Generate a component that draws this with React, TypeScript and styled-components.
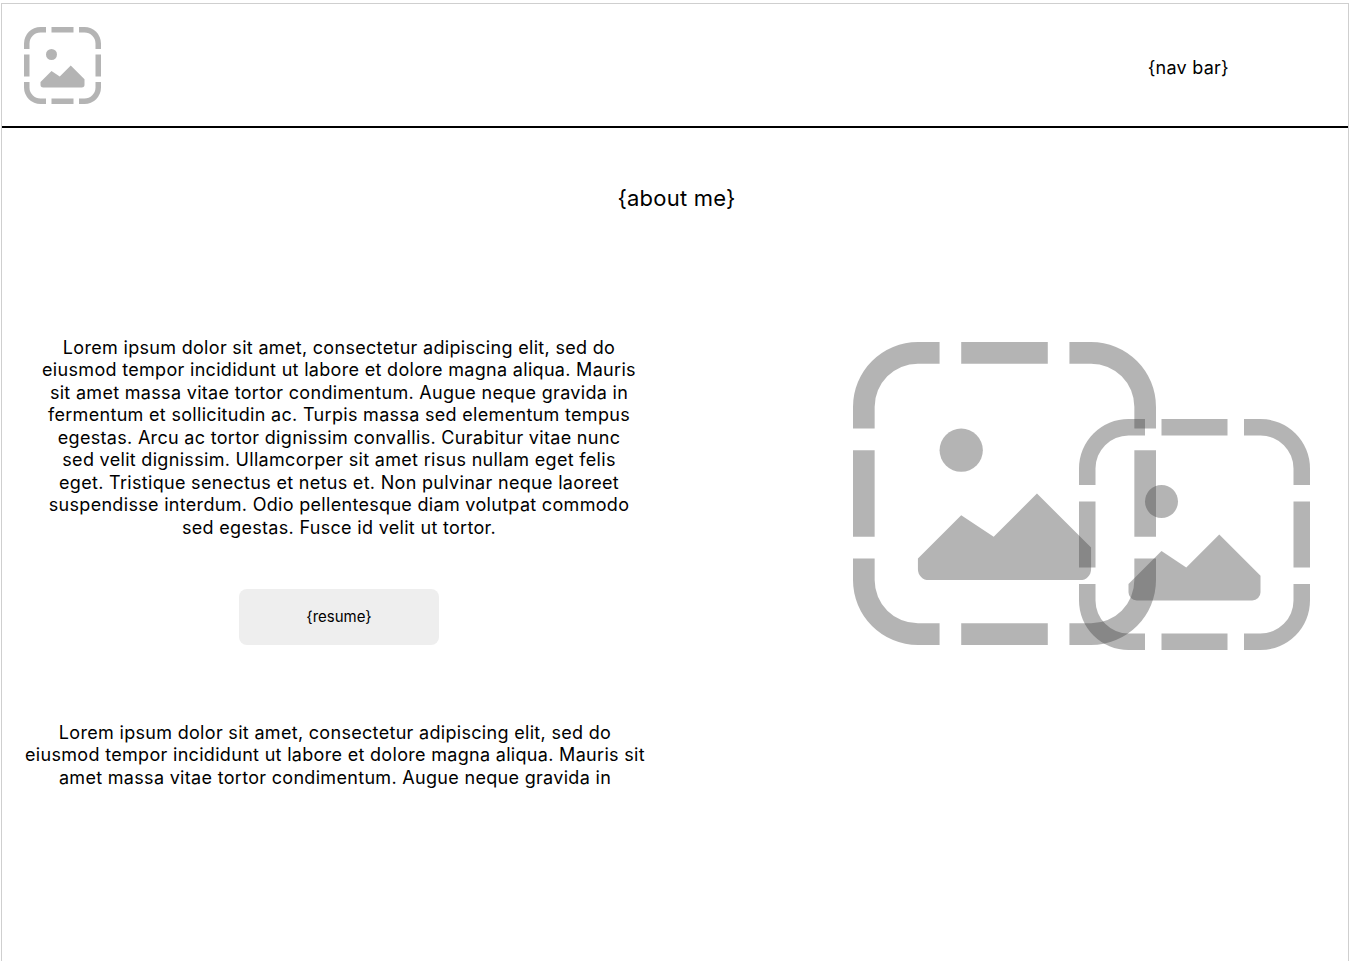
// App.tsx
// Wireframe da página "about me": barra de navegação, texto e placeholders de imagem.
import styled, { createGlobalStyle } from 'styled-components';

const GlobalStyle = createGlobalStyle`
  html, body {
    margin: 0;
    padding: 0;
    background: #fff;
    overflow: hidden;
  }

  body {
    font-family: 'Inter', 'Liberation Sans', sans-serif;
    color: #000;
  }
`;

const Frame = styled.div`
  box-sizing: border-box;
  width: 1348px;
  height: 958px;
  margin: 3px 0 0 1px;
  border: solid #cfcfcf;
  border-width: 1px 1px 0 1px;
  overflow: hidden;
`;

const Header = styled.header`
  box-sizing: border-box;
  height: 124px;
  display: flex;
  align-items: center;
  justify-content: space-between;
  padding: 0 119px 0 22px;
  border-bottom: 2px solid #000;
`;

const NavBar = styled.nav`
  margin-top: 5px;
  font-size: 18px;
  line-height: 22px;
  letter-spacing: 0.25px;
`;

const Title = styled.h1`
  margin: 57px 0 0;
  padding-left: 3px;
  font-size: 22px;
  font-weight: 400;
  line-height: 27px;
  letter-spacing: 0.2px;
  text-align: center;
`;

const Content = styled.main`
  display: flex;
  justify-content: space-between;
  margin-top: 124.5px;
`;

const TextColumn = styled.section`
  width: 630px;
  margin-left: 18px;
  display: flex;
  flex-direction: column;
  align-items: center;
`;

const Paragraph = styled.p<{ $width: number; $inset?: number }>`
  width: ${({ $width }) => $width}px;
  margin: 0 0 0 ${({ $inset }) => $inset ?? 0}px;
  font-size: 18px;
  line-height: 22.5px;
  letter-spacing: 0.31px;
  text-align: center;
`;

const ResumeButton = styled.button`
  width: 200px;
  height: 56px;
  margin: 49.5px 0 77px 8px;
  padding: 0;
  border: none;
  border-radius: 8px;
  background: #eeeeee;
  color: #000;
  font-family: inherit;
  font-size: 15px;
  line-height: 18px;
`;

const Pictures = styled.div`
  position: relative;
  width: 457px;
  height: 308px;
  margin: 5.5px 38px 0 0;
`;

const PlaceholderSvg = styled.svg<{ $size: number }>`
  display: block;
  width: ${({ $size }) => $size}px;
  height: ${({ $size }) => $size}px;
  opacity: 0.39;
  fill: #414141;
`;

const OverlayPicture = styled.div`
  position: absolute;
  left: 226px;
  top: 77px;
`;

function ImagePlaceholder({ size }: { size: number }) {
  return (
    <PlaceholderSvg $size={size} viewBox="0 0 14 14">
      <path d="M4 0H3A3 3 0 0 0 0 3V4H1V3A2 2 0 0 1 3 1H4Z" />
      <path d="M5 0H9V1H5Z" />
      <path d="M10 0H11A3 3 0 0 1 14 3V4H13V3A2 2 0 0 0 11 1H10Z" />
      <path d="M0 5H1V9H0Z" />
      <path d="M13 5H14V9H13Z" />
      <path d="M0 10H1V11A2 2 0 0 0 3 13H4V14H3A3 3 0 0 1 0 11Z" />
      <path d="M5 13H9V14H5Z" />
      <path d="M14 10H13V11A2 2 0 0 1 11 13H10V14H11A3 3 0 0 0 14 11Z" />
      <circle cx="5" cy="5" r="1" />
      <path d="M3 10L5 8L6.5 9L8.5 7L11 9.5V10.5A.5.5 0 0 1 10.5 11H3.5A.5.5 0 0 1 3 10.5Z" />
    </PlaceholderSvg>
  );
}

const lorem =
  'Lorem ipsum dolor sit amet, consectetur adipiscing elit, sed do eiusmod tempor incididunt ut labore et dolore magna aliqua. Mauris sit amet massa vitae tortor condimentum. Augue neque gravida in fermentum et sollicitudin ac. Turpis massa sed elementum tempus egestas. Arcu ac tortor dignissim convallis. Curabitur vitae nunc sed velit dignissim. Ullamcorper sit amet risus nullam eget felis eget. Tristique senectus et netus et. Non pulvinar neque laoreet suspendisse interdum. Odio pellentesque diam volutpat commodo sed egestas. Fusce id velit ut tortor.';

const loremShort =
  'Lorem ipsum dolor sit amet, consectetur adipiscing elit, sed do eiusmod tempor incididunt ut labore et dolore magna aliqua. Mauris sit amet massa vitae tortor condimentum. Augue neque gravida in';

export default function App() {
  return (
    <>
      <GlobalStyle />
      <Frame>
        <Header>
          <ImagePlaceholder size={77} />
          <NavBar>{'{nav bar}'}</NavBar>
        </Header>

        <Title>{'{about me}'}</Title>

        <Content>
          <TextColumn>
            <Paragraph $width={596} $inset={8}>{lorem}</Paragraph>
            <ResumeButton>{'{resume}'}</ResumeButton>
            <Paragraph $width={622}>{loremShort}</Paragraph>
          </TextColumn>

          <Pictures>
            <ImagePlaceholder size={303} />
            <OverlayPicture>
              <ImagePlaceholder size={231} />
            </OverlayPicture>
          </Pictures>
        </Content>
      </Frame>
    </>
  );
}
